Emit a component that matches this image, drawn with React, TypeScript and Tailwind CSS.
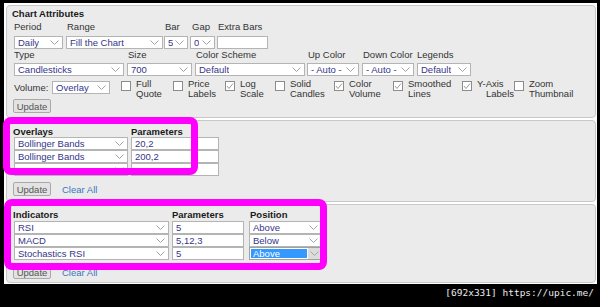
import React from 'react';

const Chevron = () => (
  <svg width="9" height="5" viewBox="0 0 9 5" className="shrink-0">
    <polyline points="0.5,0.5 4.5,4.5 8.5,0.5" fill="none" stroke="#a3a3a3" strokeWidth="1" />
  </svg>
);

function Select({ w, text }: { w: string; text?: string }) {
  return (
    <div className={`${w} h-[13px] shrink-0 border border-[#b4b4b4] bg-white flex items-center justify-between pl-[3px] pr-[3px] text-[#35358a]`}>
      <span className="whitespace-nowrap overflow-hidden">{text}</span>
      <Chevron />
    </div>
  );
}

function Input({ w, text }: { w: string; text?: string }) {
  return (
    <div className={`${w} h-[13px] shrink-0 border border-[#b4b4b4] bg-white flex items-center pl-[3px] text-[#35358a]`}>
      {text}
    </div>
  );
}

function Check({ w, checked, lines, indent }: { w: string; checked?: boolean; lines: [string, string]; indent?: boolean }) {
  return (
    <div className={`${w} shrink-0 flex items-start gap-[5px]`}>
      <div className="w-[10px] h-[10px] shrink-0 border border-[#8c8c8c] bg-white flex items-center justify-center">
        {checked && (
          <svg width="8" height="8" viewBox="0 0 8 8">
            <polyline points="1,4 3,6.5 7,1.5" fill="none" stroke="#9c9c9c" strokeWidth="1" />
          </svg>
        )}
      </div>
      <div className="-mt-[2px] leading-[9.5px] text-[#333] whitespace-nowrap">
        <div>{lines[0]}</div>
        <div className={indent ? 'ml-[9px]' : ''}>{lines[1]}</div>
      </div>
    </div>
  );
}

const UpdateBtn = () => (
  <div className="-ml-[1px] w-[38px] h-[14px] border border-[#a9a9a9] bg-[#e3e3e3] rounded-[2px] flex items-center justify-center text-[#555]">
    Update
  </div>
);

export default function App() {
  return (
    <div className="relative w-[600px] h-[307px] bg-black font-['Liberation_Sans',Arial,sans-serif] text-[9.5px] leading-[11px] overflow-hidden">
      <div className="ml-[4px] mr-[3px] mt-[3px] h-[281px] bg-white pl-[2px] pr-[1px] pt-[2px] flex flex-col gap-[2px]">
        {/* Chart Attributes */}
        <div className="h-[113px] shrink-0 rounded-[4px] border border-[#c8c8c8] bg-[#ebebeb] pl-[7px] pt-[2px]">
          <div className="-ml-[2px] font-bold text-[#1a1a1a]">Chart Attributes</div>
          <div className="flex mt-[2px] text-[#333]">
            <div className="w-[52px]">Period</div>
            <div className="w-[98px] pl-[1px]">Range</div>
            <div className="w-[26px] pl-[1px]">Bar</div>
            <div className="w-[27px] pl-[2px]">Gap</div>
            <div className="pl-[1px]">Extra Bars</div>
          </div>
          <div className="flex mt-[4px]">
            <div className="w-[52px]"><Select w="w-[49px]" text="Daily" /></div>
            <div className="w-[98px]"><Select w="w-[97px]" text="Fill the Chart" /></div>
            <div className="w-[26px]"><Select w="w-[24px]" text="5" /></div>
            <div className="w-[27px]"><Select w="w-[25px]" text="0" /></div>
            <Input w="w-[51px]" />
          </div>
          <div className="flex text-[#333]">
            <div className="w-[113px]">Type</div>
            <div className="w-[68px] pl-[1px]">Size</div>
            <div className="w-[112px] pl-[1px]">Color Scheme</div>
            <div className="w-[55px] pl-[1px]">Up Color</div>
            <div className="w-[55px] pl-[1px]">Down Color</div>
            <div>Legends</div>
          </div>
          <div className="flex mt-[3px]">
            <div className="w-[113px]"><Select w="w-[110px]" text="Candlesticks" /></div>
            <div className="w-[68px]"><Select w="w-[65px]" text="700" /></div>
            <div className="w-[112px]"><Select w="w-[110px]" text="Default" /></div>
            <div className="w-[55px]"><Select w="w-[52px]" text="- Auto -" /></div>
            <div className="w-[55px]"><Select w="w-[52px]" text="- Auto -" /></div>
            <Select w="w-[54px]" text="Default" />
          </div>
          <div className="flex items-start mt-[5px]">
            <div className="w-[38px] h-[13px] flex items-center text-[#333]">Volume:</div>
            <Select w="w-[58px]" text="Overlay" />
            <div className="w-[11px] shrink-0" />
            <Check w="w-[52px]" lines={['Full', 'Quote']} />
            <Check w="w-[52px]" lines={['Price', 'Labels']} />
            <Check w="w-[50px]" checked lines={['Log', 'Scale']} />
            <Check w="w-[59px]" lines={['Solid', 'Candles']} />
            <Check w="w-[59px]" checked lines={['Color', 'Volume']} />
            <Check w="w-[69px]" checked lines={['Smoothed', 'Lines']} />
            <Check w="w-[52px]" checked lines={['Y-Axis', 'Labels']} indent />
            <Check w="w-[70px]" lines={['Zoom', 'Thumbnail']} />
          </div>
          <div className="mt-[1px]">
            <UpdateBtn />
          </div>
        </div>

        {/* Overlays */}
        <div className="h-[82px] shrink-0 rounded-[4px] border border-[#c8c8c8] bg-[#ebebeb] pl-[7px] pt-[6px]">
          <div className="flex font-bold text-[#1a1a1a] leading-[10px]">
            <div className="-ml-[1px] w-[118px]">Overlays</div>
            <div>Parameters</div>
          </div>
          <div className="flex flex-col">
            {['Bollinger Bands', 'Bollinger Bands', ''].map((name, i) => (
              <div key={i} className="flex gap-[3px]">
                <Select w="w-[114px]" text={name} />
                <Input w="w-[88px]" text={['20,2', '200,2', ''][i]} />
              </div>
            ))}
          </div>
          <div className="flex items-center mt-[6px]">
            <UpdateBtn />
            <span className="ml-[11px] text-[#3a76c0]">Clear All</span>
          </div>
        </div>

        {/* Indicators */}
        <div className="h-[79px] shrink-0 rounded-[4px] border border-[#c8c8c8] bg-[#ebebeb] pl-[7px] pt-[5px] overflow-hidden">
          <div className="flex font-bold text-[#1a1a1a] leading-[10px]">
            <div className="-ml-[1px] w-[159px]">Indicators</div>
            <div className="w-[78px]">Parameters</div>
            <div>Position</div>
          </div>
          <div className="flex flex-col mt-[1px]">
            <div className="flex">
              <Select w="w-[155px]" text="RSI" />
              <div className="ml-[3px]"><Input w="w-[72px]" text="5" /></div>
              <div className="ml-[5px]"><Select w="w-[73px]" text="Above" /></div>
            </div>
            <div className="flex">
              <Select w="w-[155px]" text="MACD" />
              <div className="ml-[3px]"><Input w="w-[72px]" text="5,12,3" /></div>
              <div className="ml-[5px]"><Select w="w-[73px]" text="Below" /></div>
            </div>
            <div className="flex">
              <Select w="w-[155px]" text="Stochastics RSI" />
              <div className="ml-[3px]"><Input w="w-[72px]" text="5" /></div>
              <div className="ml-[5px] w-[73px] h-[13px] border border-[#a0a0a0] bg-white flex">
                <div className="flex-1 m-[1px] bg-[#3399ff] text-white flex items-center pl-[2px]">Above</div>
                <div className="w-[13px] bg-[#dcdcdc] flex items-center justify-center">
                  <Chevron />
                </div>
              </div>
            </div>
          </div>
          <div className="flex items-center mt-[5px]">
            <UpdateBtn />
            <span className="ml-[11px] text-[#3a76c0]">Clear All</span>
          </div>
        </div>
      </div>

      <div className="h-[23px] flex justify-end pt-[3px] pr-[6px]">
        <span className="font-['DejaVu_Sans_Mono',monospace] text-[9.5px] leading-[12px] text-[#ececec]">
          [692x331] https://upic.me/
        </span>
      </div>

      {/* highlight boxes */}
      <div className="absolute left-[3px] top-[117px] w-[195px] h-[58px] border-[7px] border-[#ff00ff] rounded-[8px]" />
      <div className="absolute left-[4px] top-[199px] w-[323px] h-[71px] border-[7px] border-[#ff00ff] rounded-[8px]" />
    </div>
  );
}
